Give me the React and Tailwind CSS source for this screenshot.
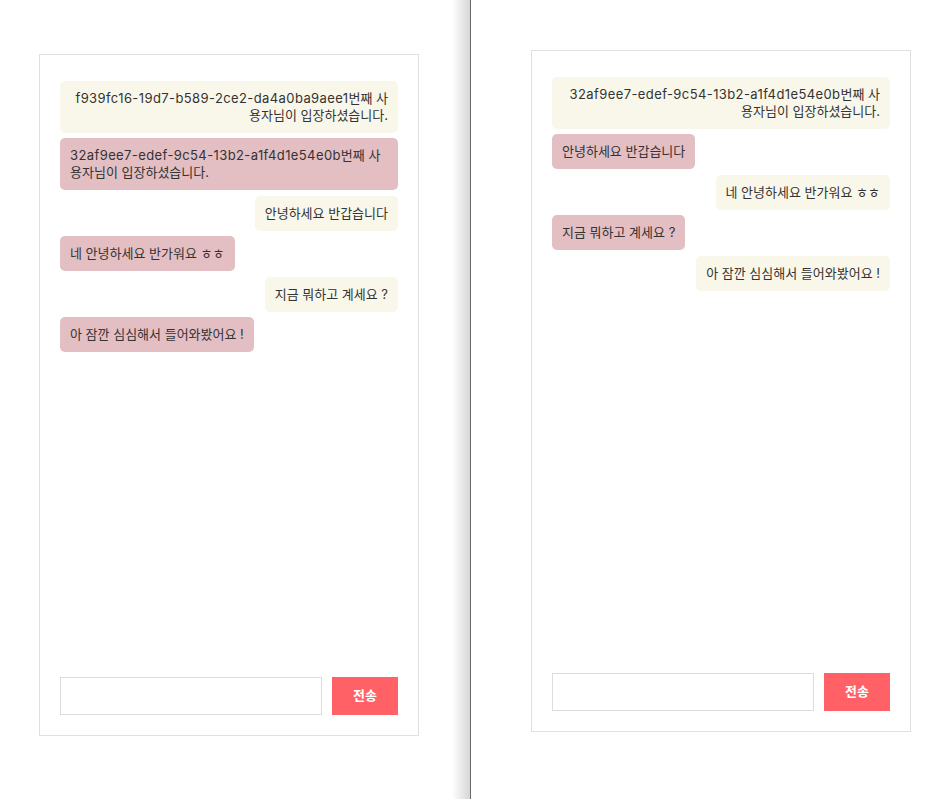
import React from "react";

const font = { fontFamily: '"Inter", "Noto Sans CJK KR", sans-serif' };

const leftMessages = [
  { mine: true, id: "f939fc16-19d7-b589-2ce2-da4a0ba9aee1", text: "번째 사용자님이 입장하셨습니다." },
  { mine: false, id: "32af9ee7-edef-9c54-13b2-a1f4d1e54e0b", text: "번째 사용자님이 입장하셨습니다." },
  { mine: true, text: "안녕하세요 반갑습니다" },
  { mine: false, text: "네 안녕하세요 반가워요 ㅎㅎ" },
  { mine: true, text: "지금 뭐하고 계세요 ?" },
  { mine: false, text: "아 잠깐 심심해서 들어와봤어요 !" },
];

const rightMessages = [
  { mine: true, id: "32af9ee7-edef-9c54-13b2-a1f4d1e54e0b", text: "번째 사용자님이 입장하셨습니다." },
  { mine: false, text: "안녕하세요 반갑습니다" },
  { mine: true, text: "네 안녕하세요 반가워요 ㅎㅎ" },
  { mine: false, text: "지금 뭐하고 계세요 ?" },
  { mine: true, text: "아 잠깐 심심해서 들어와봤어요 !" },
];

function Bubble({ mine, id, text }) {
  return (
    <div
      className={
        mine
          ? "self-end mt-[5.5px] max-w-full break-all rounded-[5px] bg-[#f9f7ea] px-[10px] py-[9px] text-right text-[13px] leading-[17px] text-[#333]"
          : "self-start mt-[5.5px] max-w-full break-all rounded-[5px] bg-[#e3bec3] px-[10px] py-[9px] text-left text-[13px] leading-[17px] text-[#333]"
      }
    >
      {id && <span className="tracking-[0.4px]">{id}</span>}
      {text}
    </div>
  );
}

function ChatCard({ messages }) {
  return (
    <div className="flex h-[682px] w-[380px] flex-col border border-[#e0e0e0] bg-white p-5">
      <div className="flex flex-1 flex-col">
        {messages.map((m, i) => (
          <Bubble key={i} {...m} />
        ))}
      </div>
      <div className="flex gap-[10px]">
        <input className="h-[38px] flex-1 border border-[#dddddd] px-2 text-[13px] outline-none" />
        <button className="h-[38px] w-[66px] bg-[#ff6166] text-[13px] font-bold text-white">
          전송
        </button>
      </div>
    </div>
  );
}

export default function App() {
  return (
    <div className="flex h-[799px] w-full overflow-hidden bg-white" style={font}>
      {/* 왼쪽 창 */}
      <div className="flex h-full w-[471px] shrink-0">
        <div className="flex-1 pl-[39px] pt-[54px]">
          <ChatCard messages={leftMessages} />
        </div>
        <div className="h-full w-[18px] bg-gradient-to-r from-white to-[#d6d6d6]" />
        <div className="h-full w-px bg-[#6a6a6a]" />
      </div>
      {/* 오른쪽 창 */}
      <div className="flex-1 pl-[60px] pt-[50px]">
        <ChatCard messages={rightMessages} />
      </div>
    </div>
  );
}
